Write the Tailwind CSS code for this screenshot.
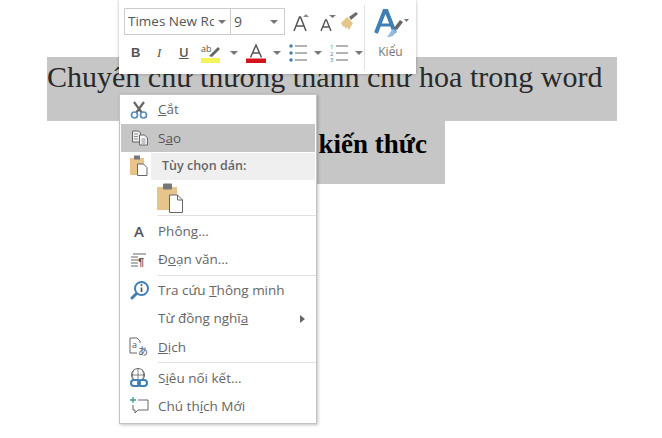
<!DOCTYPE html>
<html>
<head>
<meta charset="utf-8">
<script src="https://cdn.jsdelivr.net/npm/@tailwindcss/browser@4"></script>
</head>
<body class="bg-white">
<div class="relative w-[662px] h-[438px] overflow-hidden bg-white font-['Open_Sans','Noto_Sans',sans-serif]">
  <!-- document -->
  <div class="pt-[57px] font-['Liberation_Serif',serif] text-[#2a2a2a]">
    <div class="ml-[47px] w-[570px] h-[64px] bg-[#c6c6c6] text-[30px] leading-[40px] whitespace-nowrap">Chuyển chữ thường thành chữ hoa trong word</div>
    <div class="ml-[120px] w-[325px] h-[63px] bg-[#c6c6c6] flex justify-end pr-[18px] pt-[5px] text-[27px] leading-[36px] font-bold text-black">kiến thức</div>
  </div>

  <!-- mini toolbar -->
  <div class="absolute left-[119px] top-0 w-[297px] h-[74px] bg-white shadow-[0_0_3px_rgba(0,0,0,0.3)] flex text-[#555]">
    <div class="ml-[5px] w-[240px] flex-none">
      <div class="flex items-center mt-[8px] h-[27px]">
        <div class="w-[107px] h-[27px] border border-[#ccc] flex items-center pl-[3px] text-[13.500px] whitespace-nowrap">
          <span class="w-[86px] overflow-hidden">Times New Rc</span>
          <svg class="ml-[4px]" width="8" height="4" viewBox="0 0 8 4"><path d="M0 0h8L4 4z" fill="#777"/></svg>
        </div>
        <div class="w-[54px] h-[27px] border border-l-0 border-[#ccc] flex items-center justify-between pl-[3px] pr-[6px] text-[14px]">
          <span>9</span>
          <svg width="8" height="4" viewBox="0 0 8 4"><path d="M0 0h8L4 4z" fill="#777"/></svg>
        </div>
        <svg class="ml-[8px] mt-[3px]" width="16" height="20" viewBox="0 0 16 20"><path d="M1 18L6.500 4h1L13 18M3.500 13h7" fill="none" stroke="#555" stroke-width="1.500"/><path d="M10 4l3-3 3 3z" fill="#888"/></svg>
        <svg class="ml-[11px] mt-[3px]" width="16" height="20" viewBox="0 0 16 20"><path d="M1 18L5.500 7h1L11 18M3 14h6" fill="none" stroke="#555" stroke-width="1.400"/><path d="M9 2h7l-3.500 3z" fill="#777"/></svg>
        <svg class="ml-[4px]" width="20" height="20" viewBox="0 0 20 20"><path d="M1 11l6-6 6 6-4 7-2-3-1 2-2-3-1 1z" fill="#e3c68a"/><path d="M9 5l2 3 7-6-2-2z" fill="#6b6b6b"/></svg>
      </div>
      <div class="flex items-center h-[24px] mt-[6px] text-[#555]">
        <span class="w-[24px] pl-[7px] text-[13px] font-bold font-['Liberation_Sans',sans-serif]">B</span>
        <span class="w-[26px] pl-[9px] text-[13px] italic font-['Liberation_Serif',serif]">I</span>
        <span class="w-[25px] pl-[5px] text-[13px] font-semibold underline">U</span>
        <svg width="24" height="22" viewBox="0 0 24 22"><text x="2" y="10" font-size="9" font-family="Open Sans" fill="#555">ab</text><path d="M10 14l9-9 2 2-8 8z" fill="#666"/><rect x="2" y="16" width="19" height="5" fill="#f3f35a"/></svg>
        <svg class="ml-[7px]" width="8" height="4" viewBox="0 0 8 4"><path d="M0 0h8L4 4z" fill="#777"/></svg>
        <svg class="ml-[8px]" width="20" height="22" viewBox="0 0 20 22"><path d="M4.500 15.500L10 3l5.500 12.500M6.500 11h7" fill="none" stroke="#555" stroke-width="1.500"/><rect y="16.500" x="0" width="20" height="4.500" fill="#d3141c"/></svg>
        <svg class="ml-[7px]" width="8" height="4" viewBox="0 0 8 4"><path d="M0 0h8L4 4z" fill="#777"/></svg>
        <svg class="ml-[8px]" width="18" height="20" viewBox="0 0 18 20"><path d="M6 3h12M6 10h12M6 17h12" stroke="#666" stroke-width="1"/><circle cx="2" cy="3" r="1.700" fill="#3c7fb1"/><circle cx="2" cy="10" r="1.700" fill="#3c7fb1"/><circle cx="2" cy="17" r="1.700" fill="#3c7fb1"/></svg>
        <svg class="ml-[7px]" width="8" height="4" viewBox="0 0 8 4"><path d="M0 0h8L4 4z" fill="#777"/></svg>
        <svg class="ml-[8px]" width="18" height="20" viewBox="0 0 18 20"><path d="M6 3h12M6 10h12M6 17h12" stroke="#666" stroke-width="1"/><text x="0" y="5.500" font-size="6" font-family="Open Sans" fill="#3c7fb1">1</text><text x="0" y="12.500" font-size="6" font-family="Open Sans" fill="#3c7fb1">2</text><text x="0" y="19" font-size="6" font-family="Open Sans" fill="#3c7fb1">3</text></svg>
        <svg class="ml-[7px]" width="8" height="4" viewBox="0 0 8 4"><path d="M0 0h8L4 4z" fill="#777"/></svg>
      </div>
    </div>
    <div class="absolute left-[245px] top-[5px] w-px h-[66px] bg-[#e2e2e2]"></div>
    <div class="absolute left-[246px] top-[8px] w-[51px] flex flex-col items-center">
      <svg width="36" height="29" viewBox="0 0 36 29"><path d="M3 25L11.500 3h2L22 25" fill="none" stroke="#3f7fb5" stroke-width="4"/><path d="M6 17h13" stroke="#3f7fb5" stroke-width="3"/><path d="M21 20l6-8 3 2-6 8z" fill="#666"/><path d="M14 29c4 0 8-1 9-6l-3-2c-2 1-3 5-6 8z" fill="#8fbce0"/><path d="M31 11h5l-2.500 3z" fill="#777"/></svg>
      <span class="text-[12px] leading-[14px] mt-[8px] text-[#777]">Kiểu</span>
    </div>
  </div>

  <!-- context menu -->
  <div class="absolute left-[119px] top-[94px] w-[198px] h-[330px] bg-white border border-[#c4c4c4] shadow-[1px_1px_3px_rgba(0,0,0,0.25)] text-[13.500px] text-[#666] flex flex-col">
    <div class="h-[29px] flex items-center shrink-0">
      <span class="w-[38px] flex justify-center"><svg width="18" height="18" viewBox="0 0 18 18"><path d="M4 1l8 11M14 1L6 12" stroke="#666" stroke-width="2.200"/><circle cx="4.500" cy="14" r="3" fill="none" stroke="#5b8fb8" stroke-width="1.700"/><circle cx="13.500" cy="14" r="3" fill="none" stroke="#5b8fb8" stroke-width="1.700"/></svg></span>
      <span><span class="underline">C</span>ắt</span>
    </div>
    <div class="h-[28px] mx-px bg-[#c6c6c6] flex items-center shrink-0">
      <span class="w-[37px] flex justify-center"><svg width="18" height="16" viewBox="0 0 18 16"><path d="M1.500 1h6l2 2v9h-8z" fill="#eee" stroke="#666"/><path d="M8.500 5h5l3 3v7h-8z" fill="#f5f5f5" stroke="#666"/><path d="M3 4h4M3 6.500h4M3 9h4M10.500 9h4M10.500 11h4M10.500 13h4" stroke="#777" stroke-width=".8"/></svg></span>
      <span class="text-[#555]">S<span class="underline">a</span>o</span>
    </div>
    <div class="h-[27px] mt-px flex shrink-0">
      <span class="w-[30px] flex justify-center pl-[9px] pt-[2px]"><svg width="19" height="22" viewBox="0 0 19 22"><rect x="0" y="3" width="14" height="17" fill="#e6c48c"/><rect x="4" y="0.500" width="6" height="4" fill="#777"/><path d="M7.500 9h6l3.500 3.500v8h-9.500z" fill="#fff" stroke="#666"/></svg></span>
      <span class="flex-1 ml-px mr-px bg-[#efefef] flex items-center pl-[11px] font-semibold text-[12.500px] text-[#666]">Tùy chọn dán:</span>
    </div>
    <div class="h-[35px] pl-[37px] pt-[3px] shrink-0">
      <svg width="26" height="30" viewBox="0 0 26 30"><rect x="0" y="4" width="20" height="23" fill="#e6c48c"/><rect x="6" y="0.500" width="9" height="6" rx="1" fill="#777"/><path d="M12.500 12h8l5 5v12.500h-13z" fill="#fff" stroke="#666"/><path d="M20.500 12v5h5" fill="none" stroke="#666"/></svg>
    </div>
    <div class="h-px ml-[38px] bg-[#e2e2e2] shrink-0"></div>
    <div class="h-[28px] mt-px flex items-center shrink-0">
      <span class="w-[38px] flex justify-center text-[15px] font-semibold text-[#555]">A</span>
      <span>Phôn<span class="underline">g</span>...</span>
    </div>
    <div class="h-[28px] flex items-center shrink-0">
      <span class="w-[38px] flex justify-center"><svg width="16" height="15" viewBox="0 0 16 15"><path d="M2 2h13M0 5h7M0 8h7M0 11h7M0 14h7" stroke="#666" stroke-width="1"/><text x="7" y="14" font-size="11" font-family="Liberation Sans" font-weight="bold" fill="#555">¶</text></svg></span>
      <span>Đ<span class="underline">o</span>ạn văn...</span>
    </div>
    <div class="h-px ml-[38px] mt-[2px] bg-[#e2e2e2] shrink-0"></div>
    <div class="h-[28px] flex items-center shrink-0">
      <span class="w-[38px] flex justify-center pl-[2px]"><svg width="20" height="20" viewBox="0 0 20 20"><path d="M6 14l-4 4" stroke="#3f7fb5" stroke-width="3" stroke-linecap="round"/><circle cx="11.500" cy="8.500" r="6.500" fill="#fff" stroke="#3f7fb5" stroke-width="2"/><path d="M11.500 7.500v4.500" stroke="#555" stroke-width="1.700"/><circle cx="11.500" cy="5" r="1" fill="#555"/></svg></span>
      <span class="whitespace-nowrap">Tra cứu <span class="underline">T</span>hông minh</span>
    </div>
    <div class="h-[29px] flex items-center shrink-0 relative">
      <span class="w-[38px]"></span>
      <span>Từ đồng nghĩ<span class="underline">a</span></span>
      <svg class="absolute left-[180px] top-[11px]" width="5" height="8" viewBox="0 0 5 8"><path d="M0 0l5 4-5 4z" fill="#666"/></svg>
    </div>
    <div class="h-[28px] flex items-center shrink-0">
      <span class="w-[38px] flex justify-center"><svg width="20" height="20" viewBox="0 0 20 20"><path d="M8 16H1V1h7l3 3v2" fill="none" stroke="#666"/><text x="3" y="11" font-size="9" font-family="Open Sans" fill="#555">a</text><text x="9" y="17.500" font-size="10" font-family="Noto Sans CJK JP" fill="#555">あ</text></svg></span>
      <span><span class="underline">D</span>ịch</span>
    </div>
    <div class="h-px ml-[38px] mt-px bg-[#e2e2e2] shrink-0"></div>
    <div class="h-[28px] mt-px flex items-center shrink-0">
      <span class="w-[38px] flex justify-center"><svg width="20" height="20" viewBox="0 0 20 20"><circle cx="9" cy="7" r="6.500" fill="none" stroke="#666"/><path d="M2.500 7h13M9 .5v13M5 1.500c-2 4-2 7 0 11M13 1.500c2 4 2 7 0 11" fill="none" stroke="#666" stroke-width=".8"/><rect x="2" y="12" width="9" height="6" rx="3" fill="#fff" stroke="#3f7fb5" stroke-width="2"/><rect x="9" y="12" width="9" height="6" rx="3" fill="none" stroke="#3f7fb5" stroke-width="2"/></svg></span>
      <span>S<span class="underline">i</span>êu nối kết...</span>
    </div>
    <div class="h-[28px] flex items-center shrink-0">
      <span class="w-[38px] flex justify-center"><svg width="19" height="18" viewBox="0 0 19 18"><path d="M8 3h10v10H8l-3 3v-3H3V8" fill="none" stroke="#666"/><path d="M3 0v6M0 3h6" stroke="#3a9a8c" stroke-width="1.300"/></svg></span>
      <span>Chú th<span class="underline">í</span>ch Mới</span>
    </div>
  </div>
</div>
</body>
</html>
